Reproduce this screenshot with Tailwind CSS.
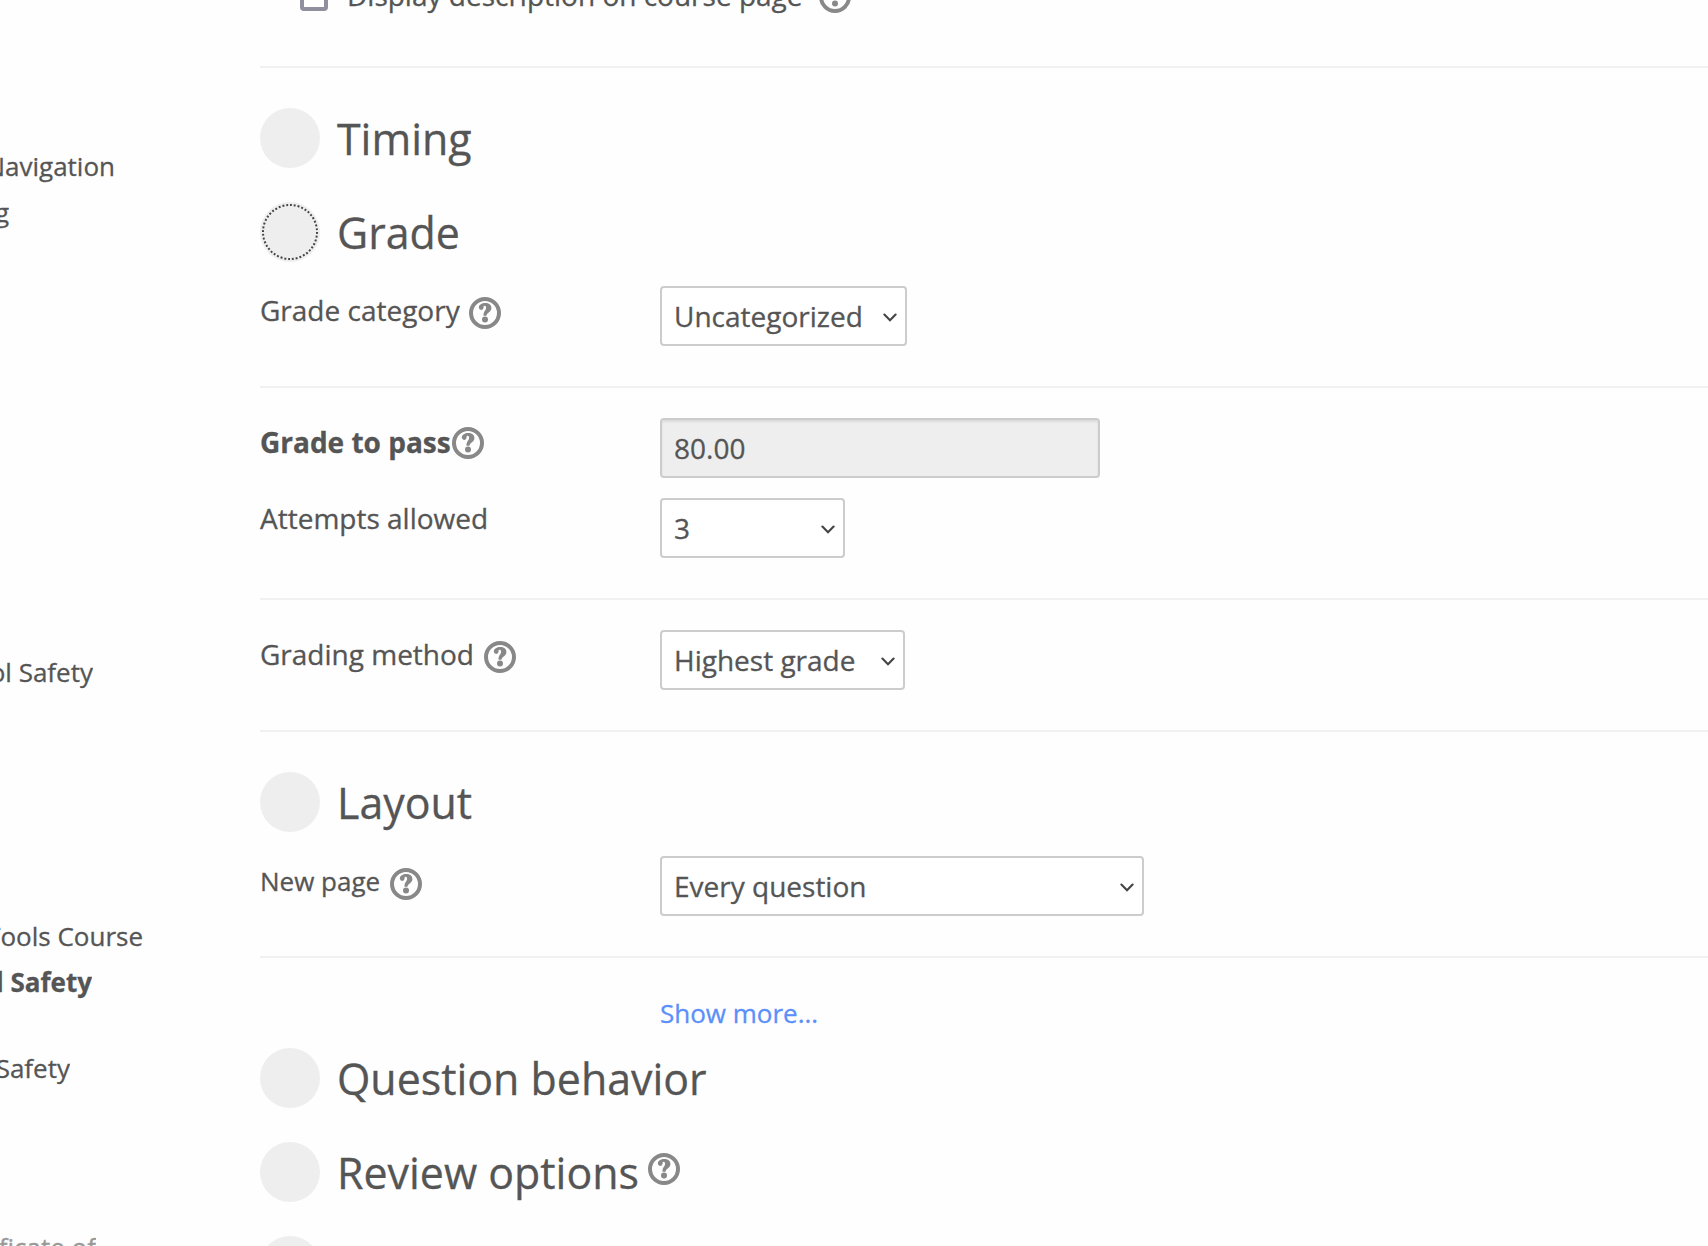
<!DOCTYPE html>
<html lang="en">
<head>
    <meta charset="UTF-8">
    <meta name="viewport" content="width=device-width, initial-scale=1.0">
    <title>Quiz settings</title>
    <script src="https://cdn.jsdelivr.net/npm/@tailwindcss/browser@4"></script>
</head>
<body class="bg-[#fefefe] font-['Open_Sans',sans-serif] text-[#555] text-[28px] leading-[40px] [-webkit-text-stroke:0.3px]">

    <!-- Shared icons -->
    <svg class="hidden">
        <symbol id="help" viewBox="0 0 32 32">
            <circle cx="16" cy="16" r="14" fill="none" stroke="#888" stroke-width="4"/>
            <circle cx="12.2" cy="10.6" r="2.3" fill="#888"/>
            <path d="M9.900 10.800C10.200 7.600 12.800 6.100 16.200 6.100c3.700 0 6.200 1.800 6.200 4.900 0 4.300-4.700 4.300-4.900 7.800h-3c-.3-4.600 2.600-5.400 2.600-8 0-1.300-.6-2-1.500-2-1 0-1.300.9-1.300 2z" fill="#888"/>
            <circle cx="16" cy="22.600" r="3" fill="#888"/>
        </symbol>
        <symbol id="chevron" viewBox="0 0 14 9">
            <path d="M1.400 1.600 7 7.300l5.600-5.700" fill="none" stroke="#444" stroke-width="2.100" stroke-linecap="round"/>
        </symbol>
    </svg>

    <div class="flex h-[1246px] w-full overflow-hidden">

        <!-- Course navigation -->
        <nav class="w-[260px] shrink-0 text-[26px] whitespace-nowrap">
            <div class="mt-[146px] flex h-[46px] w-[115px] justify-end overflow-hidden">Navigation</div>
            <div class="flex h-[46px] w-[9px] justify-end overflow-hidden">g</div>
            <div class="mt-[414px] flex h-[46px] w-[93px] justify-end overflow-hidden">ol Safety</div>
            <div class="mt-[218px] flex h-[46px] w-[143px] justify-end overflow-hidden">Tools Course</div>
            <div class="flex h-[46px] w-[92px] justify-end overflow-hidden font-bold">l Safety</div>
            <div class="mt-[40px] flex h-[46px] w-[70px] justify-end overflow-hidden">Safety</div>
            <div class="mt-[133px] flex w-[96px] justify-end overflow-hidden text-[#999]">ficate of</div>
        </nav>

        <!-- Settings form -->
        <main class="flex-1">
            <div class="-mt-[25px] flex h-[91px] items-start pl-[40px]">
                <span class="mt-[8px] h-[28px] w-[28px] rounded-[4px] border-4 border-[#8f8f9d] bg-white"></span>
                <span class="ml-[19px]">Display description on course page</span>
                <svg class="mt-[6px] ml-[16px] h-8 w-8"><use href="#help"/></svg>
            </div>
            <hr class="border-t-2 border-[#f1f1f1]">

            <div class="mt-[40px] flex h-[60px]">
                <span class="h-[60px] w-[60px] rounded-full bg-[#eee]"></span>
                <h3 class="ml-[17px] text-[42.9px] leading-[61px]">Timing</h3>
            </div>

            <div class="mt-[34px] flex h-[60px]">
                <svg class="h-[60px] w-[60px]" viewBox="0 0 60 60">
                    <circle cx="30" cy="30" r="30" fill="#eee"/>
                    <circle cx="30" cy="30" r="27" fill="none" stroke="#444" stroke-width="2" stroke-dasharray="2 2" pathLength="176"/>
                </svg>
                <h3 class="ml-[17px] text-[42.9px] leading-[61px]">Grade</h3>
            </div>

            <div class="mt-[24px] flex h-[60px]">
                <div class="flex w-[400px] items-start">
                    <label class="mt-[4px]">Grade category</label>
                    <svg class="mt-[11px] ml-[9px] h-8 w-8"><use href="#help"/></svg>
                </div>
                <div class="flex w-[247px] items-center justify-between rounded-[4px] border-2 border-[#ccc] bg-white pr-[8px] pl-[12px]">
                    Uncategorized
                    <svg class="mt-[2px] h-[9px] w-[14px]"><use href="#chevron"/></svg>
                </div>
            </div>
            <hr class="mt-[40px] border-t-2 border-[#f1f1f1]">

            <div class="mt-[30px] flex h-[60px]">
                <div class="flex w-[400px] items-start">
                    <label class="mt-[4px] font-bold">Grade to pass</label>
                    <svg class="mt-[9px] ml-[1px] h-8 w-8"><use href="#help"/></svg>
                </div>
                <div class="flex w-[440px] items-center rounded-[4px] border-2 border-[#ccc] bg-[#eee] pl-[12px] shadow-[inset_0_2px_2px_rgba(0,0,0,0.075)]">80.00</div>
            </div>
            <div class="mt-[20px] flex h-[60px]">
                <label class="w-[400px]">Attempts allowed</label>
                <div class="flex w-[185px] items-center justify-between rounded-[4px] border-2 border-[#ccc] bg-white pr-[8px] pl-[12px]">
                    3
                    <svg class="mt-[2px] h-[9px] w-[14px]"><use href="#chevron"/></svg>
                </div>
            </div>
            <hr class="mt-[40px] border-t-2 border-[#f1f1f1]">

            <div class="mt-[30px] flex h-[60px]">
                <div class="flex w-[400px] items-start">
                    <label class="mt-[4px]">Grading method</label>
                    <svg class="mt-[11px] ml-[10px] h-8 w-8"><use href="#help"/></svg>
                </div>
                <div class="flex w-[245px] items-center justify-between rounded-[4px] border-2 border-[#ccc] bg-white pr-[8px] pl-[12px]">
                    Highest grade
                    <svg class="mt-[2px] h-[9px] w-[14px]"><use href="#chevron"/></svg>
                </div>
            </div>
            <hr class="mt-[40px] border-t-2 border-[#f1f1f1]">

            <div class="mt-[40px] flex h-[60px]">
                <span class="h-[60px] w-[60px] rounded-full bg-[#eee]"></span>
                <h3 class="ml-[17px] text-[42.9px] leading-[61px]">Layout</h3>
            </div>
            <div class="mt-[24px] flex h-[60px]">
                <div class="flex w-[400px] items-start">
                    <label class="mt-[5px] text-[26px]">New page</label>
                    <svg class="mt-[12px] ml-[10px] h-8 w-8"><use href="#help"/></svg>
                </div>
                <div class="flex w-[484px] items-center justify-between rounded-[4px] border-2 border-[#ccc] bg-white pr-[8px] pl-[12px]">
                    Every question
                    <svg class="mt-[2px] h-[9px] w-[14px]"><use href="#chevron"/></svg>
                </div>
            </div>
            <hr class="mt-[40px] border-t-2 border-[#f1f1f1]">

            <div class="mt-[35px] h-[55px] pl-[400px] text-[26px]">
                <a href="#" class="text-[#5b8ff9]">Show more...</a>
            </div>

            <div class="flex h-[60px]">
                <span class="h-[60px] w-[60px] rounded-full bg-[#eee]"></span>
                <h3 class="ml-[17px] text-[42.9px] leading-[61px]">Question behavior</h3>
            </div>
            <div class="mt-[34px] flex h-[60px]">
                <span class="h-[60px] w-[60px] rounded-full bg-[#eee]"></span>
                <h3 class="ml-[17px] text-[42.9px] leading-[61px]">Review options</h3>
                <svg class="mt-[11px] ml-[9px] h-8 w-8"><use href="#help"/></svg>
            </div>
            <div class="mt-[34px] flex h-[60px]">
                <span class="h-[60px] w-[60px] rounded-full bg-[#eee]"></span>
            </div>
        </main>
    </div>

</body>
</html>
